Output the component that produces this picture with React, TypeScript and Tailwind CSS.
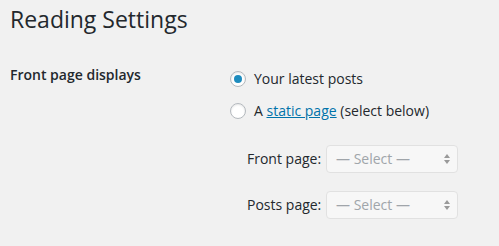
import { useState } from 'react';

function Radio({ checked }: { checked: boolean }) {
  return (
    <span className="w-4 h-4 rounded-full border border-[#b4b9be] bg-white shadow-[inset_0_1px_2px_rgba(0,0,0,0.1)] flex items-center justify-center shrink-0">
      {checked && <span className="w-2 h-2 rounded-full bg-[#1e8cbe]" />}
    </span>
  );
}

function FakeSelect() {
  return (
    <div className="w-[132px] h-[28px] rounded-[4px] border border-[#e1e1e1] bg-[#f7f7f7] flex items-center justify-between pl-[9px] pr-[6px] text-[14px] text-[#a0a5aa]">
      <span>— Select —</span>
      <svg width="8" height="12" viewBox="0 0 8 12">
        <path d="M4 1 L7 5 H1 Z" fill="#999" />
        <path d="M4 11 L7 7 H1 Z" fill="#999" />
      </svg>
    </div>
  );
}

export default function App() {
  const [mode] = useState<'posts' | 'page'>('posts');

  return (
    <div className="w-[499px] h-[246px] bg-[#f1f1f1] text-[#23282d] font-['Open_Sans',sans-serif] overflow-hidden">
      <h1 className="text-[23px] leading-[29px] font-normal pl-[10px] pt-[5px]">Reading Settings</h1>

      <div className="flex mt-[30px] pl-[10px]">
        <div className="w-[220px] text-[14px] font-semibold leading-[20px] pt-[1px]">Front page displays</div>
        <div className="flex flex-col text-[14px] leading-[20px]">
          <label className="flex items-center gap-[8px] h-[20px] mt-[5px]">
            <Radio checked={mode === 'posts'} />
            <span>Your latest posts</span>
          </label>
          <label className="flex items-center gap-[8px] h-[20px] mt-[12px]">
            <Radio checked={mode === 'page'} />
            <span>
              A <a className="text-[#0073aa] underline">static page</a> (select below)
            </span>
          </label>

          <div className="flex flex-col gap-[18px] mt-[24px] pl-[17px]">
            <div className="flex items-center gap-[4px]">
              <span className="w-[75px]">Front page:</span>
              <FakeSelect />
            </div>
            <div className="flex items-center gap-[4px]">
              <span className="w-[75px]">Posts page:</span>
              <FakeSelect />
            </div>
          </div>
        </div>
      </div>
    </div>
  );
}
